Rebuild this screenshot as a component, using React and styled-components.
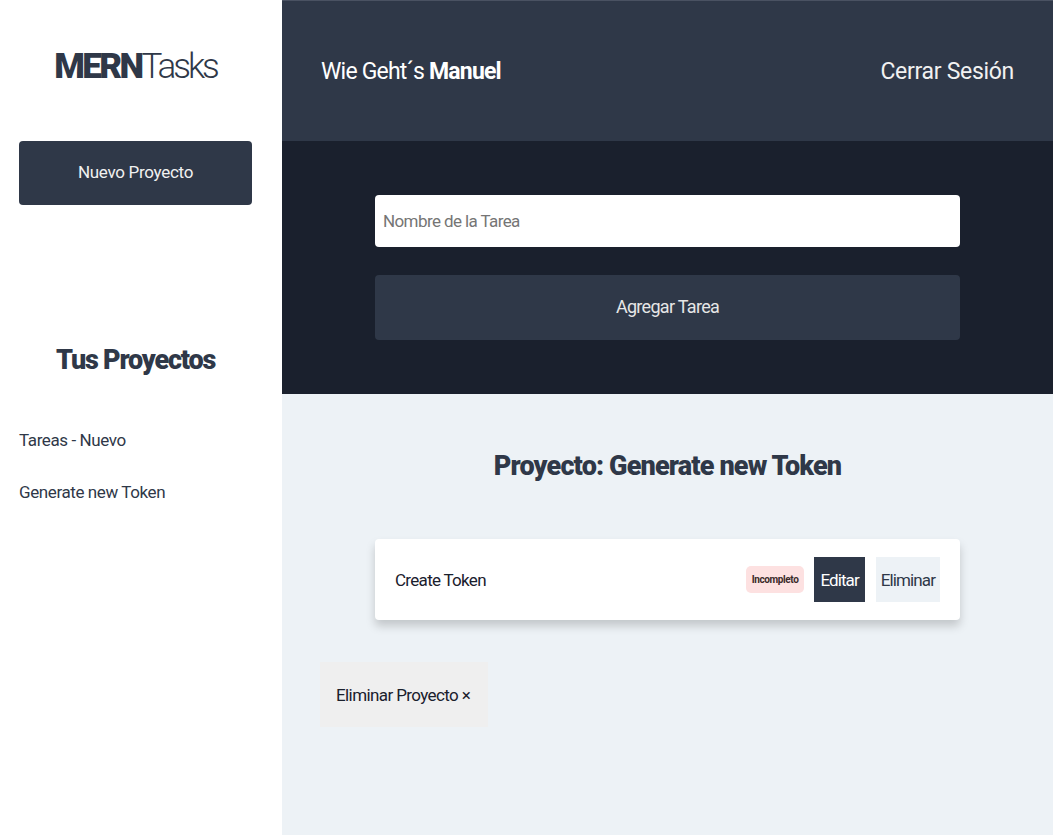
import React from "react";
import styled, { createGlobalStyle } from "styled-components";

const Global = createGlobalStyle`
  * { box-sizing: border-box; }
  html, body { margin: 0; padding: 0; }
  body { font-family: Roboto, "Liberation Sans", sans-serif; color: #2f3848; background: #fff; }
`;

const Layout = styled.div`
  display: grid;
  grid-template-columns: 282px 1fr;
  min-height: 835px;
`;

const Sidebar = styled.aside`
  background: #fff;
  padding: 44px 30px 0 19px;
  display: flex;
  flex-direction: column;
`;

const Logo = styled.h1`
  margin: 0;
  text-align: center;
  font-size: 35px;
  line-height: 46px;
  letter-spacing: -3px;
  color: #2f3848;
  font-weight: 300;
  b { font-weight: 900; letter-spacing: -2.6px; }
`;

const NewProjectButton = styled.button`
  margin-top: 51px;
  height: 64px;
  border: none;
  border-radius: 4px;
  background: #2f3848;
  color: #f1f1f1;
  font-family: inherit;
  font-size: 17px;
  letter-spacing: -0.3px;
  padding-bottom: 4px;
`;

const SideTitle = styled.h2`
  margin: 138px 0 0;
  text-align: center;
  font-size: 27px;
  line-height: 34px;
  font-weight: 900;
  letter-spacing: -1.2px;
`;

const ProjectList = styled.ul`
  list-style: none;
  margin: 52px 0 0;
  padding: 0;
  display: flex;
  flex-direction: column;
  gap: 30px;
`;

const ProjectItem = styled.li`
  font-size: 17px;
  line-height: 22px;
  letter-spacing: -0.4px;
  color: #2f3848;
`;

const Main = styled.main`
  display: flex;
  flex-direction: column;
  background: #edf2f6;
`;

const Header = styled.header`
  height: 141px;
  background: #2f3848;
  border-top: 1px solid #4a5262;
  display: flex;
  align-items: center;
  justify-content: space-between;
  padding: 0 39px 0 39px;
  color: #fff;
  font-size: 23px;
  letter-spacing: -0.8px;
  b { font-weight: 700; }
`;

const Logout = styled.button`
  border: none;
  background: none;
  color: #f1f1f1;
  font-family: inherit;
  font-size: 23px;
  letter-spacing: -0.3px;
  padding: 0;
`;

const FormArea = styled.section`
  background: #1a202d;
  padding: 54px 0;
  display: flex;
  flex-direction: column;
  align-items: center;
  gap: 28px;
`;

const Input = styled.input`
  width: 585px;
  height: 52px;
  border: none;
  border-radius: 4px;
  padding: 0 8px;
  font-family: inherit;
  font-size: 17px;
  letter-spacing: -0.6px;
  &::placeholder { color: #757575; }
`;

const AddButton = styled.button`
  width: 585px;
  height: 65px;
  border: none;
  border-radius: 4px;
  background: #2f3848;
  color: #e6e6e6;
  font-family: inherit;
  font-size: 18px;
  letter-spacing: -0.7px;
  padding-bottom: 4px;
`;

const Content = styled.section`
  padding: 52px 0 0 38px;
  display: flex;
  flex-direction: column;
`;

const ProjectTitle = styled.h2`
  margin: 0 38px 0 0;
  text-align: center;
  font-size: 27px;
  line-height: 40px;
  font-weight: 900;
  letter-spacing: -0.85px;
`;

const TaskCard = styled.div`
  margin: 53px 0 0 55px;
  width: 585px;
  height: 81px;
  background: #fff;
  border-radius: 4px;
  box-shadow: 0 6px 10px rgba(0, 0, 0, 0.18);
  display: flex;
  align-items: center;
  padding: 0 20px;
`;

const TaskName = styled.p`
  margin: 0;
  flex: 1;
  font-size: 17px;
  letter-spacing: -0.7px;
  color: #1a202d;
`;

const Badge = styled.span`
  height: 27px;
  padding: 0 6px;
  border-radius: 5px;
  background: #fde1e1;
  color: #3a2a2a;
  font-size: 10px;
  font-weight: 700;
  letter-spacing: -0.4px;
  display: flex;
  align-items: center;
  margin-right: 10px;
`;

const ActionButton = styled.button`
  height: 45px;
  border: none;
  padding: 0 ${(p) => (p.$dark ? "6px" : "5px")};
  font-family: inherit;
  font-size: 17px;
  letter-spacing: -0.9px;
  background: ${(p) => (p.$dark ? "#2f3848" : "#edf2f6")};
  color: ${(p) => (p.$dark ? "#fff" : "#2f3848")};
  & + & { margin-left: 11px; }
`;

const DeleteProject = styled.button`
  margin-top: 42px;
  align-self: flex-start;
  width: 168px;
  height: 65px;
  border: none;
  background: #efefef;
  color: #1a202d;
  font-family: inherit;
  font-size: 17px;
  letter-spacing: -0.6px;
  text-align: left;
  padding: 0 16px;
`;

export default function App() {
  return (
    <>
      <Global />
      <Layout>
        <Sidebar>
          <Logo><b>MERN</b>Tasks</Logo>
          <NewProjectButton>Nuevo Proyecto</NewProjectButton>
          <SideTitle>Tus Proyectos</SideTitle>
          <ProjectList>
            <ProjectItem>Tareas - Nuevo</ProjectItem>
            <ProjectItem>Generate new Token</ProjectItem>
          </ProjectList>
        </Sidebar>
        <Main>
          <Header>
            <span>Wie Geht´s <b>Manuel</b></span>
            <Logout>Cerrar Sesión</Logout>
          </Header>
          <FormArea>
            <Input placeholder="Nombre de la Tarea" />
            <AddButton>Agregar Tarea</AddButton>
          </FormArea>
          <Content>
            <ProjectTitle>Proyecto: Generate new Token</ProjectTitle>
            <TaskCard>
              <TaskName>Create Token</TaskName>
              <Badge>Incompleto</Badge>
              <ActionButton $dark>Editar</ActionButton>
              <ActionButton>Eliminar</ActionButton>
            </TaskCard>
            <DeleteProject>Eliminar Proyecto ×</DeleteProject>
          </Content>
        </Main>
      </Layout>
    </>
  );
}
